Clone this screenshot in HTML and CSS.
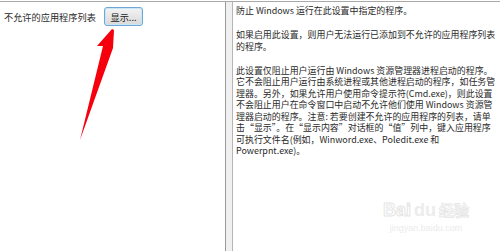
FILE: index.html
```html
<!DOCTYPE html>
<html lang="zh-CN">
<head>
    <meta charset="UTF-8">
    <title>不允许的应用程序列表</title>
    <link rel="stylesheet" href="styles.css">
</head>
<body>

    <div class="window">
        <div class="options-pane">
            <div class="option-row">
                <span class="option-label">不允许的应用程序列表</span>
                <button class="show-btn">显示...</button>
            </div>
            <svg class="arrow" width="40" height="120" viewBox="0 0 40 120">
                <polygon points="33,8 18,25 24,25 1,119 34,27 35,9" fill="#f5000c"/>
            </svg>
        </div>

        <div class="splitter"></div>

        <div class="help-pane">
            <p>防止 Windows 运行在此设置中指定的程序。</p>
            <p>如果启用此设置，则用户无法运行已添加到不允许的应用程序列表<br>的程序。</p>
            <p>此设置仅阻止用户运行由 Windows 资源管理器进程启动的程序。<br>它不会阻止用户运行由系统进程或其他进程启动的程序，如任务管<br>理器。另外，如果允许用户使用命令提示符(Cmd.exe)，则此设置<br>不会阻止用户在命令窗口中启动不允许他们使用 Windows 资源管<br>理器启动的程序。注意: 若要创建不允许的应用程序的列表，请单<br>击“显示”。在“显示内容”对话框的“值”列中，键入应用程序<br>可执行文件名(例如，Winword.exe、Poledit.exe 和<br>Powerpnt.exe)。</p>

            <div class="watermark">
                <div class="wm-logo"><span class="wm-bai">Bai</span><span class="wm-du">du</span><span class="wm-jy">经验</span></div>
                <div class="wm-url">jingyan.baidu.com</div>
            </div>
        </div>
    </div>

</body>
</html>
```

FILE: styles.css
```css
* {
    margin: 0;
    padding: 0;
    box-sizing: border-box;
}

body {
    width: 500px;
    height: 251px;
    overflow: hidden;
    background: white;
    padding-top: 1px;
    font-family: "Noto Sans CJK SC", "Noto Sans", sans-serif;
    color: #2a2a2a;
}

.window {
    display: flex;
    height: 250px;
    border-top: 1px solid #a9a9a9;
}

.options-pane {
    position: relative;
    width: 226px;
    border-right: 1px solid #9a9a9a;
    background: white;
}

.option-row {
    display: flex;
    align-items: center;
    padding: 5px 0 0 4px;
}

.option-label {
    font-size: 9.2px;
    width: 100px;
}

.show-btn {
    width: 39px;
    height: 19px;
    font-family: inherit;
    font-size: 9.2px;
    color: #222;
    border: 1px solid #6fa7d6;
    border-radius: 3px;
    background: linear-gradient(#f4f4f4, #e6e6e6 50%, #d9d9d9);
    box-shadow: inset 0 0 0 1px #c9e6f7;
}

.arrow {
    position: absolute;
    left: 79px;
    top: 19px;
}

.splitter {
    width: 6px;
    background: #f0f0f0;
}

.help-pane {
    position: relative;
    flex: 1;
    border-left: 1px solid #b5b5b5;
    padding: 3px 0 0 3px;
    font-size: 8.95px;
    line-height: 11.5px;
    white-space: nowrap;
    overflow: hidden;
}

.help-pane p {
    margin-bottom: 12.5px;
}

.watermark {
    position: absolute;
    left: 150px;
    top: 196px;
    color: #ececec;
    text-align: center;
}

.wm-logo {
    font-family: "Liberation Sans", sans-serif;
    font-size: 18px;
    line-height: 24px;
    font-weight: bold;
}

.wm-bai {
    color: white;
    -webkit-text-stroke: 1px #e6e6e6;
}

.wm-du {
    color: #ececec;
    margin: 0 3px;
}

.wm-jy {
    font-family: "Noto Sans CJK SC", sans-serif;
    font-size: 15px;
    color: white;
    -webkit-text-stroke: 0.8px #e6e6e6;
}

.wm-url {
    font-family: "Liberation Sans", sans-serif;
    font-size: 9px;
    line-height: 12px;
    color: #ebebeb;
}
```
